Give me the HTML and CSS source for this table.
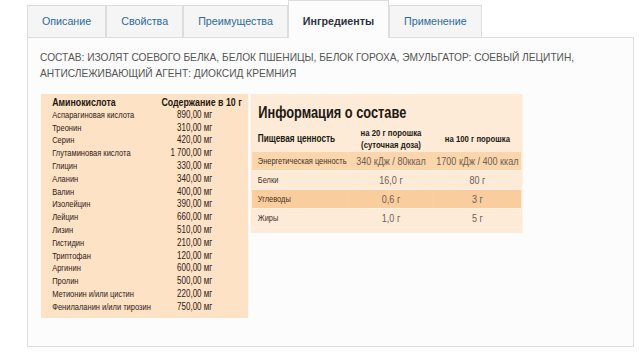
FILE: index.html
```html
<!DOCTYPE html>
<html lang="ru">
<head>
<meta charset="utf-8">
<title>Ингредиенты</title>
<link rel="stylesheet" href="styles.css">
</head>
<body>
<div class="wrap">
  <ul class="tabs">
    <li class="tab">Описание</li>
    <li class="tab">Свойства</li>
    <li class="tab">Преимущества</li>
    <li class="tab active">Ингредиенты</li>
    <li class="tab">Применение</li>
  </ul>
  <div class="panel">
    <p class="composition">СОСТАВ: ИЗОЛЯТ СОЕВОГО БЕЛКА, БЕЛОК ПШЕНИЦЫ, БЕЛОК ГОРОХА, ЭМУЛЬГАТОР: СОЕВЫЙ ЛЕЦИТИН, АНТИСЛЕЖИВАЮЩИЙ АГЕНТ: ДИОКСИД КРЕМНИЯ</p>
    <div class="tables">
      <div class="amino">
        <table>
          <thead>
            <tr><th class="c1">Аминокислота</th><th class="c2">Содержание в 10 г</th></tr>
          </thead>
          <tbody>
            <tr><td class="c1">Аспарагиновая кислота</td><td class="c2">890,00 мг</td></tr>
            <tr><td class="c1">Треонин</td><td class="c2">310,00 мг</td></tr>
            <tr><td class="c1">Серин</td><td class="c2">420,00 мг</td></tr>
            <tr><td class="c1">Глутаминовая кислота</td><td class="c2">1 700,00 мг</td></tr>
            <tr><td class="c1">Глицин</td><td class="c2">330,00 мг</td></tr>
            <tr><td class="c1">Аланин</td><td class="c2">340,00 мг</td></tr>
            <tr><td class="c1">Валин</td><td class="c2">400,00 мг</td></tr>
            <tr><td class="c1">Изолейцин</td><td class="c2">390,00 мг</td></tr>
            <tr><td class="c1">Лейцин</td><td class="c2">660,00 мг</td></tr>
            <tr><td class="c1">Лизин</td><td class="c2">510,00 мг</td></tr>
            <tr><td class="c1">Гистидин</td><td class="c2">210,00 мг</td></tr>
            <tr><td class="c1">Триптофан</td><td class="c2">120,00 мг</td></tr>
            <tr><td class="c1">Аргинин</td><td class="c2">600,00 мг</td></tr>
            <tr><td class="c1">Пролин</td><td class="c2">500,00 мг</td></tr>
            <tr><td class="c1">Метионин и/или цистин</td><td class="c2">220,00 мг</td></tr>
            <tr><td class="c1">Фенилаланин и/или тирозин</td><td class="c2">750,00 мг</td></tr>
          </tbody>
        </table>
      </div>
      <div class="nutri">
        <div class="nutri-title">Информация о составе</div>
        <table>
          <thead>
            <tr><th class="n1">Пищевая ценность</th><th class="n2">на 20 г порошка<br>(суточная доза)</th><th class="n3">на 100 г порошка</th></tr>
          </thead>
          <tbody>
            <tr class="band"><td class="n1">Энергетическая ценность</td><td class="n2">340 кДж / 80ккал</td><td class="n3">1700 кДж / 400 ккал</td></tr>
            <tr><td class="n1">Белки</td><td class="n2">16,0 г</td><td class="n3">80 г</td></tr>
            <tr class="band band-dark"><td class="n1">Углеводы</td><td class="n2">0,6 г</td><td class="n3">3 г</td></tr>
            <tr><td class="n1">Жиры</td><td class="n2">1,0 г</td><td class="n3">5 г</td></tr>
          </tbody>
        </table>
      </div>
    </div>
  </div>
</div>
</body>
</html>
```
FILE: styles.css
```css
html, body {
  margin: 0;
  padding: 0;
  background: #ffffff;
}

body {
  font-family: "Liberation Sans", Arial, sans-serif;
}

.wrap {
  width: 607px;
  margin-left: 27px;
}

/* ---------- tabs ---------- */
.tabs {
  display: flex;
  align-items: flex-end;
  list-style: none;
  margin: 0 0 -1px;
  padding: 0;
  height: 38px;
  position: relative;
  z-index: 1;
}

.tab {
  font-size: 10.7px;
  line-height: 16px;
  padding: 7px 14px 8px;
  border: 1px solid #dddddd;
  border-bottom: 0;
  background: #f5f5f5;
  color: #2b6a9e;
  margin-bottom: 1px;
}

.tab.active {
  background: #fcfcfc;
  color: #2c3240;
  font-weight: bold;
  padding-top: 12px;
  padding-bottom: 9px;
  margin-bottom: 0;
}

/* ---------- panel ---------- */
.panel {
  border: 1px solid #dddddd;
  background: #fcfcfc;
  padding: 12px 12px 28px;
}

.composition {
  margin: 0 0 12px;
  font-size: 10.2px;
  line-height: 16px;
  color: #555555;
}

/* the label images use a narrow typeface: the table block is drawn
   horizontally condensed (scale 0.8); widths below are pre-scale */
.tables {
  display: flex;
  align-items: flex-start;
  gap: 2.5px;
  width: 602px;
  margin-left: 1px;
  transform: scaleX(0.8);
  transform-origin: left top;
}

.amino,
.nutri {
  flex-shrink: 0;
  font-family: "Liberation Sans", Arial, sans-serif;
}

.amino table,
.nutri table {
  border-collapse: collapse;
  border-spacing: 0;
  table-layout: fixed;
}

/* ---------- amino acid table ---------- */
.amino {
  width: 259px;
  background: #fde2c5;
  padding: 2px 0 4px;
}

.amino table {
  width: 100%;
}

.amino th,
.amino td {
  font-size: 9.4px;
  line-height: 12.8px;
  height: 12.8px;
  padding: 0;
  color: #2e2116;
  white-space: nowrap;
}

.amino td.c2 {
  font-size: 10px;
}

.amino th {
  font-weight: bold;
  font-size: 11px;
  color: #22180f;
}

.amino .c1 {
  width: 135px;
  padding-left: 14px;
  text-align: left;
}

.amino th.c2 {
  text-align: right;
  padding-right: 8px;
}

.amino td.c2 {
  text-align: right;
  padding-right: 45px;
}

/* ---------- nutrition table ---------- */
.nutri {
  width: 340px;
  background: #fdebd8;
  padding-bottom: 5px;
}

.nutri-title {
  font-size: 16px;
  line-height: 20px;
  font-weight: bold;
  color: #22180f;
  padding: 9px 0 3px 10px;
}

.nutri table {
  margin-left: 2.5px;
  width: 336px;
}

.nutri th {
  height: 26px;
  font-size: 9.7px;
  line-height: 12px;
  font-weight: bold;
  color: #22180f;
  padding: 0;
  white-space: nowrap;
}

.nutri th.n1 {
  font-size: 10.3px;
}

.nutri td {
  height: 18px;
  font-size: 11.3px;
  line-height: 12px;
  padding: 0;
  color: #6e6053;
  border-bottom: 1px solid #fef2e6;
  white-space: nowrap;
}

.nutri .n1 {
  width: 113px;
  padding-left: 7px;
  text-align: left;
}

.nutri td.n1 {
  font-size: 9.3px;
  color: #44331f;
}

.nutri .n2 {
  width: 107px;
  text-align: center;
}

.nutri .n3 {
  width: 109px;
  text-align: center;
}

.nutri .band td {
  background: #fbd5ac;
}

.nutri .band-dark td {
  background: #f9cd9d;
}
```
